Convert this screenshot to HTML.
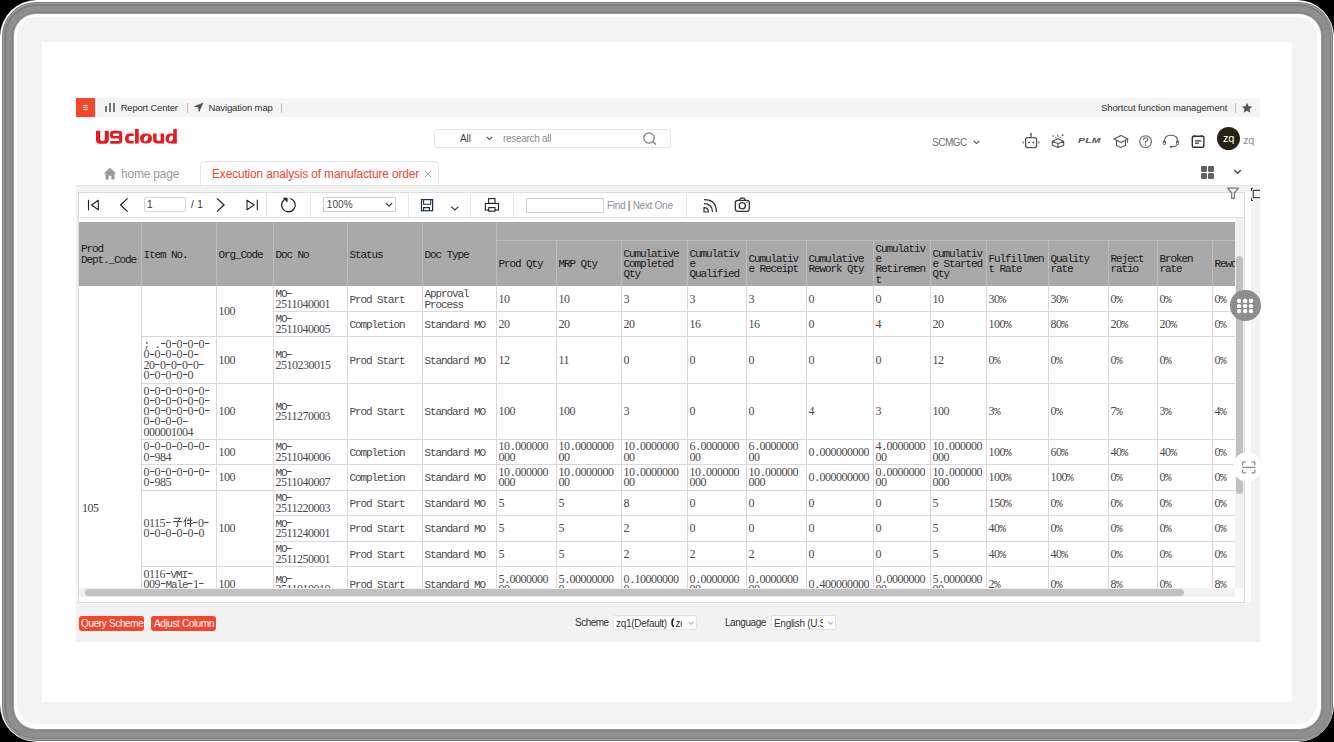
<!DOCTYPE html><html><head><meta charset="utf-8"><style>
*{box-sizing:border-box;margin:0;padding:0}
html,body{width:1334px;height:742px;overflow:hidden;background:#000}
body{position:relative;font-family:"Liberation Sans",sans-serif;color:#333}
.a{position:absolute}
.frame{left:0;top:0;width:1334px;height:742px;border-radius:40px;background:#fff}
.ring{left:2px;top:2px;width:1330px;height:738px;border-radius:38px;border:12px solid #8b8b8b;
 box-shadow:inset 0 0 0 1px #7a7a7a, 0 0 0 0.5px #888}
.inner{left:18px;top:18px;width:1298px;height:706px;border-radius:22px;background:#f3f3f3}
.content{left:42px;top:42px;width:1250px;height:660px;background:#fff}
.t{white-space:pre;position:absolute;line-height:1}
.d{font-family:"Liberation Serif",serif;font-size:12px;letter-spacing:-0.5px;line-height:1px}
.c{letter-spacing:0;line-height:1px}
.h{display:inline-block;width:5.5px;height:5px;background:linear-gradient(currentColor,currentColor) no-repeat 0.5px 0.3px/4.5px 1px}
.mono{font-family:"Liberation Mono",monospace;font-size:11px;letter-spacing:-1.1px;color:#222;line-height:10.3px;white-space:pre}
</style></head><body>
<div class="a" style="left:0;top:0;width:1334px;height:742px;border-radius:37px;background:#fff"></div>
<div class="a" style="left:2px;top:2px;width:1331px;height:739px;border-radius:34px;background:#7c7c7c"></div>
<div class="a" style="left:3px;top:3px;width:1329px;height:737px;border-radius:33px;background:#a4a4a4"></div>
<div class="a" style="left:4px;top:4px;width:1327px;height:735px;border-radius:32px;background:#7e7e7e"></div>
<div class="a" style="left:5.5px;top:5.5px;width:1324.0px;height:732.0px;border-radius:30.5px;background:#8f8f8f"></div>
<div class="a" style="left:12px;top:12px;width:1311px;height:719px;border-radius:24px;background:#808080"></div>
<div class="a" style="left:13px;top:13px;width:1309px;height:717px;border-radius:23px;background:#9c9c9c"></div>
<div class="a" style="left:14px;top:14px;width:1307px;height:715px;border-radius:22px;background:#fff"></div>
<div class="a" style="left:17px;top:17px;width:1300px;height:707px;border-radius:20px;background:#f3f3f3"></div>
<div class="a content"></div>
<div class="a" style="left:76px;top:98px;width:1184px;height:19px;background:#f4f4f4"></div>
<div class="a" style="left:76px;top:98px;width:19px;height:19px;background:#f5472e"></div>
<div class="a" style="left:83px;top:105px;width:5px;height:1px;background:#fde0dc"></div>
<div class="a" style="left:83px;top:107px;width:5px;height:1px;background:#fde0dc"></div>
<div class="a" style="left:83px;top:109px;width:5px;height:1px;background:#fde0dc"></div>
<div class="a" style="left:105px;top:106px;width:2px;height:6px;background:#777"></div>
<div class="a" style="left:109px;top:103px;width:2px;height:9px;background:#777"></div>
<div class="a" style="left:113px;top:103px;width:2px;height:9px;background:#777"></div>
<div class="t" style="left:120.7px;top:103.2px;font-size:9.5px;letter-spacing:-0.2px;color:#333">Report Center</div>
<div class="a" style="left:187px;top:103px;width:1px;height:10px;background:#bbb"></div>
<svg class="a" style="left:193px;top:102px" width="11" height="11" viewBox="0 0 11 11"><path d="M10.5 0.5 L0.5 4.5 L5 5.5 L6 10.5 Z" fill="#555"/></svg>
<div class="t" style="left:208.4px;top:103.2px;font-size:9.5px;letter-spacing:-0.12px;color:#333">Navigation map</div>
<div class="a" style="left:281px;top:103px;width:1px;height:10px;background:#bbb"></div>
<div class="t" style="left:1101px;top:103.2px;font-size:9.5px;letter-spacing:-0.11px;color:#333">Shortcut function management</div>
<div class="a" style="left:1235px;top:103px;width:1px;height:10px;background:#bbb"></div>
<svg class="a" style="left:1241px;top:102px" width="12" height="12" viewBox="0 0 24 24"><path d="M12 1.5l3.2 7 7.3.7-5.5 4.9 1.6 7.4L12 17.7l-6.6 3.8 1.6-7.4L1.5 9.2l7.3-.7z" fill="#555"/></svg>
<svg class="a" style="left:90px;top:124px" width="95" height="26" viewBox="90 124 95 26"><g fill="#e31b23">
<path d="M96 130.8H100.2V139Q100.2 140.9 102 140.9H103Q104.8 140.9 104.8 139V130.8H108.8V139.8Q108.8 143.8 104.8 143.8H100Q96 143.8 96 139.8Z"/>
<path fill-rule="evenodd" d="M113.3 130.8H118.9Q122.2 130.8 122.2 134.1V140.5Q122.2 143.8 118.9 143.8H110.2V141H119.1V138.6H113.3Q110 138.6 110 135.3V134.1Q110 130.8 113.3 130.8ZM114.1 133.5H119.1V135.9H114.1Q112.9 135.9 112.9 134.7Q112.9 133.5 114.1 133.5Z"/>
<path d="M133.7 133.4H129.5Q125 133.4 125 138.5Q125 143.6 129.5 143.6H133.7V140.9H130.2Q128.6 140.9 128.6 138.5Q128.6 136.1 130.2 136.1H133.7Z"/>
<rect x="135" y="129" width="3.7" height="14.6"/>
<path fill-rule="evenodd" d="M146 133.4Q152 133.4 152 138.5Q152 143.6 146 143.6Q140 143.6 140 138.5Q140 133.4 146 133.4ZM147.4 135.6Q149 136.3 147.8 139.5Q146.5 142 144.7 141.4Q143 140.7 144.3 137.5Q145.6 135 147.4 135.6Z"/>
<path d="M153.1 133.4H156.6V139.5Q156.6 140.8 158 140.8H160.6V133.4H164V143.6H157.5Q153.1 143.6 153.1 139.5Z"/>
<rect x="173.3" y="129" width="3.5" height="14.6"/>
<path fill-rule="evenodd" d="M174 133.4H171Q165.5 133.4 165.5 138.5Q165.5 143.6 171 143.6H174ZM172.4 135.6Q174 136.3 172.8 139.5Q171.5 142 169.7 141.4Q168 140.7 169.3 137.5Q170.6 135 172.4 135.6Z"/>
</g></svg>
<div class="a" style="left:434px;top:129px;width:237px;height:19px;border:1px solid #e6e6e6;border-radius:3px"></div>
<div class="t" style="left:460px;top:134px;font-size:10px;color:#444;letter-spacing:-0.1px">All</div>
<svg class="a" style="left:486px;top:136px" width="7" height="5" viewBox="0 0 7 5"><path d="M0.8 1L3.5 3.6L6.2 1" stroke="#555" stroke-width="1.1" fill="none"/></svg>
<div class="t" style="left:503px;top:134px;font-size:10px;color:#8c8c8c;letter-spacing:-0.3px">research all</div>
<svg class="a" style="left:643px;top:132px" width="14" height="13" viewBox="0 0 14 13"><circle cx="6" cy="6" r="5.2" stroke="#777" stroke-width="1.2" fill="none"/><path d="M9.8 9.6L13 12.5" stroke="#777" stroke-width="1.3"/></svg>
<div class="t" style="left:932px;top:138px;font-size:10px;color:#707070;letter-spacing:-0.5px">SCMGC</div>
<svg class="a" style="left:973px;top:140px" width="7" height="5" viewBox="0 0 7 5"><path d="M0.8 1L3.5 3.6L6.2 1" stroke="#555" stroke-width="1.1" fill="none"/></svg>
<svg class="a" style="left:1021px;top:132px" width="20" height="17" viewBox="0 0 20 17">
<rect x="4.6" y="5.6" width="11" height="10" rx="2" stroke="#555" stroke-width="1.3" fill="none"/>
<path d="M10 2.3V5.4" stroke="#555" stroke-width="1.2"/><circle cx="10" cy="2" r="0.9" fill="#555"/>
<circle cx="8" cy="10.5" r="0.9" fill="#555"/><circle cx="12.3" cy="10.5" r="0.9" fill="#555"/>
<path d="M2.2 9.5V11.5M17.9 9.5V11.5" stroke="#555" stroke-width="1.1"/></svg>
<svg class="a" style="left:1050px;top:132px" width="16" height="17" viewBox="1050 132 16 17">
<path d="M1052.3 141.2L1058 138.8L1063.7 141.2L1058 143.6Z M1052.3 141.2V145.3L1058 147.6L1063.7 145.3V141.2 M1058 143.6V147.6" stroke="#555" stroke-width="1.1" fill="none" stroke-linejoin="round"/>
<path d="M1055.2 137.2l1.2 1.3M1057.6 134.6l.7 2.2M1060.8 137l-1.1 1.2" stroke="#555" stroke-width="1" fill="none"/>
<circle cx="1053.2" cy="136" r="0.8" fill="#555"/><circle cx="1062.6" cy="135.2" r="0.9" fill="#555"/></svg>
<div class="t" style="left:1077.5px;top:137px;font-size:8px;font-weight:bold;font-style:italic;color:#555;letter-spacing:0.2px;transform:scaleX(1.3);transform-origin:0 0">PLM</div>
<svg class="a" style="left:1113px;top:134px" width="16" height="15" viewBox="0 0 16 15">
<path d="M1 5L8 1.5L15 5L8 8.5Z" stroke="#555" stroke-width="1.1" fill="none" stroke-linejoin="round"/>
<path d="M3.5 6.5V11.5L8 13.5L12.5 11.5V6.5" stroke="#555" stroke-width="1.1" fill="none"/>
<path d="M14.6 5.5V9" stroke="#555" stroke-width="0.9"/></svg>
<svg class="a" style="left:1138px;top:134px" width="15" height="15" viewBox="0 0 15 15"><circle cx="7.6" cy="7.6" r="5.9" stroke="#666" stroke-width="1.1" fill="none"/><path d="M5.6 6Q5.6 3.8 7.6 3.8Q9.6 3.8 9.6 5.6Q9.6 6.8 7.6 7.8V9.6" stroke="#666" stroke-width="1.1" fill="none"/><circle cx="7.6" cy="11.2" r="0.7" fill="#666"/></svg>
<svg class="a" style="left:1162px;top:134px" width="18" height="15" viewBox="0 0 18 15"><path d="M2.5 8.5V7Q2.5 1.3 9 1.3Q15.5 1.3 15.5 7V8.5" stroke="#555" stroke-width="1.1" fill="none"/><rect x="1.3" y="6.8" width="2.2" height="3.8" rx="1" stroke="#555" stroke-width="1" fill="none"/><rect x="14.5" y="6.8" width="2.2" height="3.8" rx="1" stroke="#555" stroke-width="1" fill="none"/><path d="M15.5 10.5Q15 12.5 9.5 12.8" stroke="#555" stroke-width="1" fill="none"/><circle cx="9" cy="12.8" r="1.1" fill="#555"/></svg>
<svg class="a" style="left:1190px;top:133px" width="16" height="16" viewBox="0 0 16 16"><rect x="2.3" y="3.3" width="11.6" height="11" rx="1.2" stroke="#333" stroke-width="1.4" fill="none"/><path d="M4.7 2V4.3M11.5 2V4.3" stroke="#333" stroke-width="1.3"/><path d="M5 7.8H11.3M5 10.2H9" stroke="#333" stroke-width="1.3"/></svg>
<div class="a" style="left:1217px;top:127.3px;width:23px;height:23px;border-radius:50%;background:#262314"></div>
<div class="t" style="left:1223px;top:133px;font-size:11px;color:#fff;letter-spacing:-0.2px">zq</div>
<div class="t" style="left:1243px;top:135px;font-size:11px;color:#8a90a0;letter-spacing:-0.2px">zq</div>
<svg class="a" style="left:103px;top:167px" width="14" height="13" viewBox="0 0 14 13"><path d="M7 0.8L0.8 6.5H2.6V12.5H5.6V8.8H8.4V12.5H11.4V6.5H13.2Z" fill="#999"/></svg>
<div class="t" style="left:121px;top:167.5px;font-size:12px;color:#999;letter-spacing:-0.2px">home page</div>
<div class="a" style="left:200px;top:161px;width:239px;height:26px;border:1px solid #e6e6e6;border-bottom:none;border-radius:5px 5px 0 0;background:#fff"></div>
<div class="t" style="left:212px;top:167.5px;font-size:12px;color:#f5452f;letter-spacing:-0.18px">Execution analysis of manufacture order</div>
<svg class="a" style="left:424px;top:170px" width="8" height="8" viewBox="0 0 8 8"><path d="M1 1L7 7M7 1L1 7" stroke="#aaa" stroke-width="1"/></svg>
<svg class="a" style="left:1201px;top:166px" width="13" height="13" viewBox="0 0 13 13"><rect x="0" y="0" width="6" height="6" rx="1.2" fill="#626262"/><rect x="7" y="0" width="6" height="6" rx="1.2" fill="#626262"/><rect x="0" y="7" width="6" height="6" rx="1.2" fill="#626262"/><rect x="7" y="7" width="6" height="6" rx="1.2" fill="#626262"/></svg>
<svg class="a" style="left:1232px;top:167px" width="11" height="9" viewBox="1232 167 11 9"><path d="M1234.2 170L1237.6 173.3L1241 170" stroke="#444" stroke-width="1.3" fill="none"/></svg>
<div class="a" style="left:76px;top:185px;width:1184px;height:457px;background:#f2f2f2;border-top:1px solid #e6e6e6"></div>
<div class="a" style="left:78px;top:192px;width:1173px;height:410px;background:#fff"></div>
<div class="a" style="left:78px;top:192px;width:1167px;height:411px;border:1px solid #dcdcdc"></div>
<div class="a" style="left:79px;top:217px;width:1165px;height:1px;background:#e2e2e2"></div>
<svg class="a" style="left:85px;top:197px" width="16" height="16" viewBox="85 197 16 16"><path d="M88.5 199.8V210.3" stroke="#222" stroke-width="1.1"/><path d="M98.3 200.3V209.8L91.5 205Z" stroke="#222" stroke-width="1.1" fill="none" stroke-linejoin="round"/></svg>
<svg class="a" style="left:117px;top:196px" width="14" height="18" viewBox="117 196 14 18"><path d="M127.6 198.4L120.6 205L127.6 211.6" stroke="#222" stroke-width="1.3" fill="none"/></svg>
<div class="a" style="left:144px;top:197px;width:42px;height:15px;border:1px solid #d9d9d9;border-radius:2px"></div>
<div class="t" style="left:147px;top:200px;font-size:10px;color:#333">1</div>
<div class="t" style="left:191px;top:200px;font-size:10px;color:#333;letter-spacing:0.4px">/ 1</div>
<svg class="a" style="left:214px;top:196px" width="14" height="18" viewBox="214 196 14 18"><path d="M217 198.4L224 205L217 211.6" stroke="#222" stroke-width="1.3" fill="none"/></svg>
<svg class="a" style="left:244px;top:197px" width="16" height="16" viewBox="244 197 16 16"><path d="M257.3 199.8V210.3" stroke="#222" stroke-width="1.1"/><path d="M247 200.3V209.8L254.2 205Z" stroke="#222" stroke-width="1.1" fill="none" stroke-linejoin="round"/></svg>
<div class="a" style="left:266px;top:193px;width:1px;height:24px;background:#e6e6e6"></div>
<svg class="a" style="left:278px;top:193px" width="20" height="22" viewBox="278 193 20 22"><path d="M290.2 198.47A6.8 6.8 0 1 1 286.6 198.5" stroke="#222" stroke-width="1.2" fill="none"/><path d="M283.6 198.1H287.1V201.7Z" stroke="#222" stroke-width="0.9" fill="#222" stroke-linejoin="miter"/></svg>
<div class="a" style="left:310px;top:193px;width:1px;height:24px;background:#e6e6e6"></div>
<div class="a" style="left:323px;top:197px;width:73px;height:15px;border:1px solid #cfcfcf"></div>
<div class="t" style="left:326.8px;top:200px;font-size:10px;color:#4a4a4a;letter-spacing:0.1px">100%</div>
<svg class="a" style="left:384px;top:201px" width="10" height="7" viewBox="0 0 10 7"><path d="M1.9 2L5 5.1L8.1 2" stroke="#444" stroke-width="1.2" fill="none"/></svg>
<div class="a" style="left:408px;top:193px;width:1px;height:24px;background:#e6e6e6"></div>
<svg class="a" style="left:419px;top:197px" width="16" height="16" viewBox="419 197 16 16"><rect x="421.5" y="199.6" width="11.1" height="11.1" stroke="#1c3048" stroke-width="1.2" fill="none"/><path d="M423.6 199.6V204.2H430.7V199.6" stroke="#1c3048" stroke-width="1.1" fill="none"/><path d="M423.6 210.8V207.6H429.4V210.8" stroke="#1c3048" stroke-width="1.1" fill="none"/></svg>
<svg class="a" style="left:449px;top:203px" width="11" height="9" viewBox="449 203 11 9"><path d="M451.2 206.6L454.8 210L458.4 206.6" stroke="#333" stroke-width="1.1" fill="none"/></svg>
<div class="a" style="left:470px;top:193px;width:1px;height:24px;background:#e6e6e6"></div>
<svg class="a" style="left:482px;top:196px" width="19" height="18" viewBox="482 196 19 18"><rect x="488.7" y="198.6" width="6.3" height="4.8" stroke="#222" stroke-width="1.1" fill="none"/><rect x="485.3" y="203.5" width="13.2" height="6.6" stroke="#222" stroke-width="1.1" fill="none"/><rect x="488.7" y="207.6" width="6.3" height="3.6" stroke="#222" stroke-width="1.1" fill="#fff"/></svg>
<div class="a" style="left:513px;top:193px;width:1px;height:24px;background:#e6e6e6"></div>
<div class="a" style="left:526px;top:198px;width:78px;height:15px;border:1px solid #d0d0d0"></div>
<div class="t" style="left:607px;top:201px;font-size:10px;color:#8a929c;letter-spacing:-0.28px">Find <span style="color:#5a3a1a">|</span> Next One</div>
<div class="a" style="left:686px;top:193px;width:1px;height:24px;background:#e6e6e6"></div>
<svg class="a" style="left:701px;top:196px" width="19" height="18" viewBox="701 196 19 18"><path d="M704 199.6Q716.4 199.6 716.4 212" stroke="#333" stroke-width="1.3" fill="none"/><path d="M704 203.6Q712.4 203.6 712.4 212" stroke="#333" stroke-width="1.3" fill="none"/><path d="M704 207.6Q708.4 207.6 708.4 212H704Z" stroke="#333" stroke-width="1.2" fill="none"/></svg>
<svg class="a" style="left:733px;top:196px" width="18" height="18" viewBox="733 196 18 18"><rect x="735.3" y="200.3" width="14" height="11" rx="2.5" stroke="#333" stroke-width="1.3" fill="none"/><path d="M739.2 200.3L740.6 198.2H744L745.4 200.3" stroke="#333" stroke-width="1.2" fill="none"/><circle cx="742.3" cy="205.8" r="3.1" stroke="#333" stroke-width="1.3" fill="none"/><circle cx="746.8" cy="202.4" r="0.6" fill="#333"/></svg>
<svg class="a" style="left:1225px;top:186px" width="16" height="15" viewBox="1225 186 16 15"><path d="M1227.6 188.2H1238.4L1234.3 193V198.4H1231.7V193Z" stroke="#6e7888" stroke-width="1.2" fill="none" stroke-linejoin="round"/></svg>
<div class="a" style="left:1251px;top:192px;width:9px;height:450px;background:#f2f2f2"></div>
<svg class="a" style="left:1250px;top:187px" width="10" height="15" viewBox="1250 187 10 15"><path d="M1253 188.2H1251.5V191M1251.5 198V200.5H1253" stroke="#444" stroke-width="1.1" fill="none"/><rect x="1253.3" y="190.4" width="8" height="7.2" stroke="#444" stroke-width="1.2" fill="none"/></svg>
<div class="a" style="left:79px;top:222px;width:1156px;height:366px;overflow:hidden">
<div class="a" style="left:0px;top:0px;width:1221px;height:64px;background:#a9a9a9"></div>
<div class="a" style="left:62px;top:0px;width:1px;height:64px;background:#bcbcbc"></div>
<div class="a" style="left:137px;top:0px;width:1px;height:64px;background:#bcbcbc"></div>
<div class="a" style="left:194px;top:0px;width:1px;height:64px;background:#bcbcbc"></div>
<div class="a" style="left:268px;top:0px;width:1px;height:64px;background:#bcbcbc"></div>
<div class="a" style="left:343px;top:0px;width:1px;height:64px;background:#bcbcbc"></div>
<div class="a" style="left:417px;top:0px;width:1px;height:64px;background:#bcbcbc"></div>
<div class="a" style="left:417px;top:18px;width:804px;height:1px;background:#bcbcbc"></div>
<div class="a" style="left:477px;top:18px;width:1px;height:46px;background:#bcbcbc"></div>
<div class="a" style="left:542px;top:18px;width:1px;height:46px;background:#bcbcbc"></div>
<div class="a" style="left:608px;top:18px;width:1px;height:46px;background:#bcbcbc"></div>
<div class="a" style="left:667px;top:18px;width:1px;height:46px;background:#bcbcbc"></div>
<div class="a" style="left:727px;top:18px;width:1px;height:46px;background:#bcbcbc"></div>
<div class="a" style="left:794px;top:18px;width:1px;height:46px;background:#bcbcbc"></div>
<div class="a" style="left:851px;top:18px;width:1px;height:46px;background:#bcbcbc"></div>
<div class="a" style="left:907px;top:18px;width:1px;height:46px;background:#bcbcbc"></div>
<div class="a" style="left:969px;top:18px;width:1px;height:46px;background:#bcbcbc"></div>
<div class="a" style="left:1029px;top:18px;width:1px;height:46px;background:#bcbcbc"></div>
<div class="a" style="left:1078px;top:18px;width:1px;height:46px;background:#bcbcbc"></div>
<div class="a" style="left:1133px;top:18px;width:1px;height:46px;background:#bcbcbc"></div>
<div class="a" style="left:1196px;top:18px;width:1px;height:46px;background:#bcbcbc"></div>
<div class="a mono" style="left:2px;top:0px;width:62px;height:64px;display:flex;align-items:center;padding-top:1.5px;color:#1a1a1a"><div>Prod
Dept._Code</div></div>
<div class="a mono" style="left:64.5px;top:0px;width:75px;height:64px;display:flex;align-items:center;padding-top:1.5px;color:#1a1a1a"><div>Item No.</div></div>
<div class="a mono" style="left:139.5px;top:0px;width:57px;height:64px;display:flex;align-items:center;padding-top:1.5px;color:#1a1a1a"><div>Org_Code</div></div>
<div class="a mono" style="left:196.5px;top:0px;width:74px;height:64px;display:flex;align-items:center;padding-top:1.5px;color:#1a1a1a"><div>Doc No</div></div>
<div class="a mono" style="left:270.5px;top:0px;width:75px;height:64px;display:flex;align-items:center;padding-top:1.5px;color:#1a1a1a"><div>Status</div></div>
<div class="a mono" style="left:345.5px;top:0px;width:74px;height:64px;display:flex;align-items:center;padding-top:1.5px;color:#1a1a1a"><div>Doc Type</div></div>
<div class="a mono" style="left:419.5px;top:19px;width:60px;height:45px;display:flex;align-items:center;padding-top:1.5px;color:#1a1a1a"><div>Prod Qty</div></div>
<div class="a mono" style="left:479.5px;top:19px;width:65px;height:45px;display:flex;align-items:center;padding-top:1.5px;color:#1a1a1a"><div>MRP Qty</div></div>
<div class="a mono" style="left:544.5px;top:19px;width:66px;height:45px;display:flex;align-items:center;padding-top:1.5px;color:#1a1a1a"><div>Cumulative
Completed
Qty</div></div>
<div class="a mono" style="left:610.5px;top:19px;width:59px;height:45px;display:flex;align-items:center;padding-top:1.5px;color:#1a1a1a"><div>Cumulativ
e
Qualified</div></div>
<div class="a mono" style="left:669.5px;top:19px;width:60px;height:45px;display:flex;align-items:center;padding-top:1.5px;color:#1a1a1a"><div>Cumulativ
e Receipt</div></div>
<div class="a mono" style="left:729.5px;top:19px;width:67px;height:45px;display:flex;align-items:center;padding-top:1.5px;color:#1a1a1a"><div>Cumulative
Rework Qty</div></div>
<div class="a mono" style="left:796.5px;top:19px;width:57px;height:45px;display:flex;align-items:center;padding-top:1.5px;color:#1a1a1a"><div>Cumulativ
e
Retiremen
t</div></div>
<div class="a mono" style="left:853.5px;top:19px;width:56px;height:45px;display:flex;align-items:center;padding-top:1.5px;color:#1a1a1a"><div>Cumulativ
e Started
Qty</div></div>
<div class="a mono" style="left:909.5px;top:19px;width:62px;height:45px;display:flex;align-items:center;padding-top:1.5px;color:#1a1a1a"><div>Fulfillmen
t Rate</div></div>
<div class="a mono" style="left:971.5px;top:19px;width:60px;height:45px;display:flex;align-items:center;padding-top:1.5px;color:#1a1a1a"><div>Quality
rate</div></div>
<div class="a mono" style="left:1031.5px;top:19px;width:49px;height:45px;display:flex;align-items:center;padding-top:1.5px;color:#1a1a1a"><div>Reject
ratio</div></div>
<div class="a mono" style="left:1080.5px;top:19px;width:55px;height:45px;display:flex;align-items:center;padding-top:1.5px;color:#1a1a1a"><div>Broken
rate</div></div>
<div class="a mono" style="left:1135.5px;top:19px;width:63px;height:45px;display:flex;align-items:center;padding-top:1.5px;color:#1a1a1a"><div>Rework rate</div></div>
<div class="a" style="left:0px;top:64px;width:1221px;height:414px;background:#fff"></div>
<div class="a mono" style="left:196.5px;top:64px;width:74px;height:26px;display:flex;align-items:center;padding-top:1.5px;color:#4a4a4a"><div>MO<i class="h"></i>
<span class="d">2511040001</span></div></div>
<div class="a mono" style="left:270.5px;top:64px;width:75px;height:26px;display:flex;align-items:center;padding-top:1.5px;color:#4a4a4a"><div>Prod Start</div></div>
<div class="a mono" style="left:345.5px;top:64px;width:74px;height:26px;display:flex;align-items:center;padding-top:1.5px;color:#4a4a4a"><div>Approval
Process</div></div>
<div class="a mono" style="left:419.5px;top:64px;width:60px;height:26px;display:flex;align-items:center;padding-top:1.5px;color:#4a4a4a"><div><span class="d">10</span></div></div>
<div class="a mono" style="left:479.5px;top:64px;width:65px;height:26px;display:flex;align-items:center;padding-top:1.5px;color:#4a4a4a"><div><span class="d">10</span></div></div>
<div class="a mono" style="left:544.5px;top:64px;width:66px;height:26px;display:flex;align-items:center;padding-top:1.5px;color:#4a4a4a"><div><span class="d">3</span></div></div>
<div class="a mono" style="left:610.5px;top:64px;width:59px;height:26px;display:flex;align-items:center;padding-top:1.5px;color:#4a4a4a"><div><span class="d">3</span></div></div>
<div class="a mono" style="left:669.5px;top:64px;width:60px;height:26px;display:flex;align-items:center;padding-top:1.5px;color:#4a4a4a"><div><span class="d">3</span></div></div>
<div class="a mono" style="left:729.5px;top:64px;width:67px;height:26px;display:flex;align-items:center;padding-top:1.5px;color:#4a4a4a"><div><span class="d">0</span></div></div>
<div class="a mono" style="left:796.5px;top:64px;width:57px;height:26px;display:flex;align-items:center;padding-top:1.5px;color:#4a4a4a"><div><span class="d">0</span></div></div>
<div class="a mono" style="left:853.5px;top:64px;width:56px;height:26px;display:flex;align-items:center;padding-top:1.5px;color:#4a4a4a"><div><span class="d">10</span></div></div>
<div class="a mono" style="left:909.5px;top:64px;width:62px;height:26px;display:flex;align-items:center;padding-top:1.5px;color:#4a4a4a"><div><span class="d">30</span>%</div></div>
<div class="a mono" style="left:971.5px;top:64px;width:60px;height:26px;display:flex;align-items:center;padding-top:1.5px;color:#4a4a4a"><div><span class="d">30</span>%</div></div>
<div class="a mono" style="left:1031.5px;top:64px;width:49px;height:26px;display:flex;align-items:center;padding-top:1.5px;color:#4a4a4a"><div><span class="d">0</span>%</div></div>
<div class="a mono" style="left:1080.5px;top:64px;width:55px;height:26px;display:flex;align-items:center;padding-top:1.5px;color:#4a4a4a"><div><span class="d">0</span>%</div></div>
<div class="a mono" style="left:1135.5px;top:64px;width:63px;height:26px;display:flex;align-items:center;padding-top:1.5px;color:#4a4a4a"><div><span class="d">0</span>%</div></div>
<div class="a" style="left:194px;top:89px;width:1027px;height:1px;background:#d9d9d9"></div>
<div class="a mono" style="left:196.5px;top:89px;width:74px;height:26px;display:flex;align-items:center;padding-top:1.5px;color:#4a4a4a"><div>MO<i class="h"></i>
<span class="d">2511040005</span></div></div>
<div class="a mono" style="left:270.5px;top:89px;width:75px;height:26px;display:flex;align-items:center;padding-top:1.5px;color:#4a4a4a"><div>Completion</div></div>
<div class="a mono" style="left:345.5px;top:89px;width:74px;height:26px;display:flex;align-items:center;padding-top:1.5px;color:#4a4a4a"><div>Standard MO</div></div>
<div class="a mono" style="left:419.5px;top:89px;width:60px;height:26px;display:flex;align-items:center;padding-top:1.5px;color:#4a4a4a"><div><span class="d">20</span></div></div>
<div class="a mono" style="left:479.5px;top:89px;width:65px;height:26px;display:flex;align-items:center;padding-top:1.5px;color:#4a4a4a"><div><span class="d">20</span></div></div>
<div class="a mono" style="left:544.5px;top:89px;width:66px;height:26px;display:flex;align-items:center;padding-top:1.5px;color:#4a4a4a"><div><span class="d">20</span></div></div>
<div class="a mono" style="left:610.5px;top:89px;width:59px;height:26px;display:flex;align-items:center;padding-top:1.5px;color:#4a4a4a"><div><span class="d">16</span></div></div>
<div class="a mono" style="left:669.5px;top:89px;width:60px;height:26px;display:flex;align-items:center;padding-top:1.5px;color:#4a4a4a"><div><span class="d">16</span></div></div>
<div class="a mono" style="left:729.5px;top:89px;width:67px;height:26px;display:flex;align-items:center;padding-top:1.5px;color:#4a4a4a"><div><span class="d">0</span></div></div>
<div class="a mono" style="left:796.5px;top:89px;width:57px;height:26px;display:flex;align-items:center;padding-top:1.5px;color:#4a4a4a"><div><span class="d">4</span></div></div>
<div class="a mono" style="left:853.5px;top:89px;width:56px;height:26px;display:flex;align-items:center;padding-top:1.5px;color:#4a4a4a"><div><span class="d">20</span></div></div>
<div class="a mono" style="left:909.5px;top:89px;width:62px;height:26px;display:flex;align-items:center;padding-top:1.5px;color:#4a4a4a"><div><span class="d">100</span>%</div></div>
<div class="a mono" style="left:971.5px;top:89px;width:60px;height:26px;display:flex;align-items:center;padding-top:1.5px;color:#4a4a4a"><div><span class="d">80</span>%</div></div>
<div class="a mono" style="left:1031.5px;top:89px;width:49px;height:26px;display:flex;align-items:center;padding-top:1.5px;color:#4a4a4a"><div><span class="d">20</span>%</div></div>
<div class="a mono" style="left:1080.5px;top:89px;width:55px;height:26px;display:flex;align-items:center;padding-top:1.5px;color:#4a4a4a"><div><span class="d">20</span>%</div></div>
<div class="a mono" style="left:1135.5px;top:89px;width:63px;height:26px;display:flex;align-items:center;padding-top:1.5px;color:#4a4a4a"><div><span class="d">0</span>%</div></div>
<div class="a" style="left:194px;top:114px;width:1027px;height:1px;background:#d9d9d9"></div>
<div class="a mono" style="left:196.5px;top:114px;width:74px;height:48px;display:flex;align-items:center;padding-top:1.5px;color:#4a4a4a"><div>MO<i class="h"></i>
<span class="d">2510230015</span></div></div>
<div class="a mono" style="left:270.5px;top:114px;width:75px;height:48px;display:flex;align-items:center;padding-top:1.5px;color:#4a4a4a"><div>Prod Start</div></div>
<div class="a mono" style="left:345.5px;top:114px;width:74px;height:48px;display:flex;align-items:center;padding-top:1.5px;color:#4a4a4a"><div>Standard MO</div></div>
<div class="a mono" style="left:419.5px;top:114px;width:60px;height:48px;display:flex;align-items:center;padding-top:1.5px;color:#4a4a4a"><div><span class="d">12</span></div></div>
<div class="a mono" style="left:479.5px;top:114px;width:65px;height:48px;display:flex;align-items:center;padding-top:1.5px;color:#4a4a4a"><div><span class="d">11</span></div></div>
<div class="a mono" style="left:544.5px;top:114px;width:66px;height:48px;display:flex;align-items:center;padding-top:1.5px;color:#4a4a4a"><div><span class="d">0</span></div></div>
<div class="a mono" style="left:610.5px;top:114px;width:59px;height:48px;display:flex;align-items:center;padding-top:1.5px;color:#4a4a4a"><div><span class="d">0</span></div></div>
<div class="a mono" style="left:669.5px;top:114px;width:60px;height:48px;display:flex;align-items:center;padding-top:1.5px;color:#4a4a4a"><div><span class="d">0</span></div></div>
<div class="a mono" style="left:729.5px;top:114px;width:67px;height:48px;display:flex;align-items:center;padding-top:1.5px;color:#4a4a4a"><div><span class="d">0</span></div></div>
<div class="a mono" style="left:796.5px;top:114px;width:57px;height:48px;display:flex;align-items:center;padding-top:1.5px;color:#4a4a4a"><div><span class="d">0</span></div></div>
<div class="a mono" style="left:853.5px;top:114px;width:56px;height:48px;display:flex;align-items:center;padding-top:1.5px;color:#4a4a4a"><div><span class="d">12</span></div></div>
<div class="a mono" style="left:909.5px;top:114px;width:62px;height:48px;display:flex;align-items:center;padding-top:1.5px;color:#4a4a4a"><div><span class="d">0</span>%</div></div>
<div class="a mono" style="left:971.5px;top:114px;width:60px;height:48px;display:flex;align-items:center;padding-top:1.5px;color:#4a4a4a"><div><span class="d">0</span>%</div></div>
<div class="a mono" style="left:1031.5px;top:114px;width:49px;height:48px;display:flex;align-items:center;padding-top:1.5px;color:#4a4a4a"><div><span class="d">0</span>%</div></div>
<div class="a mono" style="left:1080.5px;top:114px;width:55px;height:48px;display:flex;align-items:center;padding-top:1.5px;color:#4a4a4a"><div><span class="d">0</span>%</div></div>
<div class="a mono" style="left:1135.5px;top:114px;width:63px;height:48px;display:flex;align-items:center;padding-top:1.5px;color:#4a4a4a"><div><span class="d">0</span>%</div></div>
<div class="a" style="left:194px;top:161px;width:1027px;height:1px;background:#d9d9d9"></div>
<div class="a mono" style="left:196.5px;top:161px;width:74px;height:57px;display:flex;align-items:center;padding-top:1.5px;color:#4a4a4a"><div>MO<i class="h"></i>
<span class="d">2511270003</span></div></div>
<div class="a mono" style="left:270.5px;top:161px;width:75px;height:57px;display:flex;align-items:center;padding-top:1.5px;color:#4a4a4a"><div>Prod Start</div></div>
<div class="a mono" style="left:345.5px;top:161px;width:74px;height:57px;display:flex;align-items:center;padding-top:1.5px;color:#4a4a4a"><div>Standard MO</div></div>
<div class="a mono" style="left:419.5px;top:161px;width:60px;height:57px;display:flex;align-items:center;padding-top:1.5px;color:#4a4a4a"><div><span class="d">100</span></div></div>
<div class="a mono" style="left:479.5px;top:161px;width:65px;height:57px;display:flex;align-items:center;padding-top:1.5px;color:#4a4a4a"><div><span class="d">100</span></div></div>
<div class="a mono" style="left:544.5px;top:161px;width:66px;height:57px;display:flex;align-items:center;padding-top:1.5px;color:#4a4a4a"><div><span class="d">3</span></div></div>
<div class="a mono" style="left:610.5px;top:161px;width:59px;height:57px;display:flex;align-items:center;padding-top:1.5px;color:#4a4a4a"><div><span class="d">0</span></div></div>
<div class="a mono" style="left:669.5px;top:161px;width:60px;height:57px;display:flex;align-items:center;padding-top:1.5px;color:#4a4a4a"><div><span class="d">0</span></div></div>
<div class="a mono" style="left:729.5px;top:161px;width:67px;height:57px;display:flex;align-items:center;padding-top:1.5px;color:#4a4a4a"><div><span class="d">4</span></div></div>
<div class="a mono" style="left:796.5px;top:161px;width:57px;height:57px;display:flex;align-items:center;padding-top:1.5px;color:#4a4a4a"><div><span class="d">3</span></div></div>
<div class="a mono" style="left:853.5px;top:161px;width:56px;height:57px;display:flex;align-items:center;padding-top:1.5px;color:#4a4a4a"><div><span class="d">100</span></div></div>
<div class="a mono" style="left:909.5px;top:161px;width:62px;height:57px;display:flex;align-items:center;padding-top:1.5px;color:#4a4a4a"><div><span class="d">3</span>%</div></div>
<div class="a mono" style="left:971.5px;top:161px;width:60px;height:57px;display:flex;align-items:center;padding-top:1.5px;color:#4a4a4a"><div><span class="d">0</span>%</div></div>
<div class="a mono" style="left:1031.5px;top:161px;width:49px;height:57px;display:flex;align-items:center;padding-top:1.5px;color:#4a4a4a"><div><span class="d">7</span>%</div></div>
<div class="a mono" style="left:1080.5px;top:161px;width:55px;height:57px;display:flex;align-items:center;padding-top:1.5px;color:#4a4a4a"><div><span class="d">3</span>%</div></div>
<div class="a mono" style="left:1135.5px;top:161px;width:63px;height:57px;display:flex;align-items:center;padding-top:1.5px;color:#4a4a4a"><div><span class="d">4</span>%</div></div>
<div class="a" style="left:194px;top:217px;width:1027px;height:1px;background:#d9d9d9"></div>
<div class="a mono" style="left:196.5px;top:217px;width:74px;height:26px;display:flex;align-items:center;padding-top:1.5px;color:#4a4a4a"><div>MO<i class="h"></i>
<span class="d">2511040006</span></div></div>
<div class="a mono" style="left:270.5px;top:217px;width:75px;height:26px;display:flex;align-items:center;padding-top:1.5px;color:#4a4a4a"><div>Completion</div></div>
<div class="a mono" style="left:345.5px;top:217px;width:74px;height:26px;display:flex;align-items:center;padding-top:1.5px;color:#4a4a4a"><div>Standard MO</div></div>
<div class="a mono" style="left:419.5px;top:217px;width:60px;height:26px;display:flex;align-items:center;padding-top:1.5px;color:#4a4a4a"><div><span class="d">10</span>.<span class="d">000000</span>
<span class="d">000</span></div></div>
<div class="a mono" style="left:479.5px;top:217px;width:65px;height:26px;display:flex;align-items:center;padding-top:1.5px;color:#4a4a4a"><div><span class="d">10</span>.<span class="d">0000000</span>
<span class="d">00</span></div></div>
<div class="a mono" style="left:544.5px;top:217px;width:66px;height:26px;display:flex;align-items:center;padding-top:1.5px;color:#4a4a4a"><div><span class="d">10</span>.<span class="d">0000000</span>
<span class="d">00</span></div></div>
<div class="a mono" style="left:610.5px;top:217px;width:59px;height:26px;display:flex;align-items:center;padding-top:1.5px;color:#4a4a4a"><div><span class="d">6</span>.<span class="d">0000000</span>
<span class="d">00</span></div></div>
<div class="a mono" style="left:669.5px;top:217px;width:60px;height:26px;display:flex;align-items:center;padding-top:1.5px;color:#4a4a4a"><div><span class="d">6</span>.<span class="d">0000000</span>
<span class="d">00</span></div></div>
<div class="a mono" style="left:729.5px;top:217px;width:67px;height:26px;display:flex;align-items:center;padding-top:1.5px;color:#4a4a4a"><div><span class="d">0</span>.<span class="d">000000000</span></div></div>
<div class="a mono" style="left:796.5px;top:217px;width:57px;height:26px;display:flex;align-items:center;padding-top:1.5px;color:#4a4a4a"><div><span class="d">4</span>.<span class="d">0000000</span>
<span class="d">00</span></div></div>
<div class="a mono" style="left:853.5px;top:217px;width:56px;height:26px;display:flex;align-items:center;padding-top:1.5px;color:#4a4a4a"><div><span class="d">10</span>.<span class="d">000000</span>
<span class="d">000</span></div></div>
<div class="a mono" style="left:909.5px;top:217px;width:62px;height:26px;display:flex;align-items:center;padding-top:1.5px;color:#4a4a4a"><div><span class="d">100</span>%</div></div>
<div class="a mono" style="left:971.5px;top:217px;width:60px;height:26px;display:flex;align-items:center;padding-top:1.5px;color:#4a4a4a"><div><span class="d">60</span>%</div></div>
<div class="a mono" style="left:1031.5px;top:217px;width:49px;height:26px;display:flex;align-items:center;padding-top:1.5px;color:#4a4a4a"><div><span class="d">40</span>%</div></div>
<div class="a mono" style="left:1080.5px;top:217px;width:55px;height:26px;display:flex;align-items:center;padding-top:1.5px;color:#4a4a4a"><div><span class="d">40</span>%</div></div>
<div class="a mono" style="left:1135.5px;top:217px;width:63px;height:26px;display:flex;align-items:center;padding-top:1.5px;color:#4a4a4a"><div><span class="d">0</span>%</div></div>
<div class="a" style="left:194px;top:242px;width:1027px;height:1px;background:#d9d9d9"></div>
<div class="a mono" style="left:196.5px;top:242px;width:74px;height:27px;display:flex;align-items:center;padding-top:1.5px;color:#4a4a4a"><div>MO<i class="h"></i>
<span class="d">2511040007</span></div></div>
<div class="a mono" style="left:270.5px;top:242px;width:75px;height:27px;display:flex;align-items:center;padding-top:1.5px;color:#4a4a4a"><div>Completion</div></div>
<div class="a mono" style="left:345.5px;top:242px;width:74px;height:27px;display:flex;align-items:center;padding-top:1.5px;color:#4a4a4a"><div>Standard MO</div></div>
<div class="a mono" style="left:419.5px;top:242px;width:60px;height:27px;display:flex;align-items:center;padding-top:1.5px;color:#4a4a4a"><div><span class="d">10</span>.<span class="d">000000</span>
<span class="d">000</span></div></div>
<div class="a mono" style="left:479.5px;top:242px;width:65px;height:27px;display:flex;align-items:center;padding-top:1.5px;color:#4a4a4a"><div><span class="d">10</span>.<span class="d">0000000</span>
<span class="d">00</span></div></div>
<div class="a mono" style="left:544.5px;top:242px;width:66px;height:27px;display:flex;align-items:center;padding-top:1.5px;color:#4a4a4a"><div><span class="d">10</span>.<span class="d">0000000</span>
<span class="d">00</span></div></div>
<div class="a mono" style="left:610.5px;top:242px;width:59px;height:27px;display:flex;align-items:center;padding-top:1.5px;color:#4a4a4a"><div><span class="d">10</span>.<span class="d">000000</span>
<span class="d">000</span></div></div>
<div class="a mono" style="left:669.5px;top:242px;width:60px;height:27px;display:flex;align-items:center;padding-top:1.5px;color:#4a4a4a"><div><span class="d">10</span>.<span class="d">000000</span>
<span class="d">000</span></div></div>
<div class="a mono" style="left:729.5px;top:242px;width:67px;height:27px;display:flex;align-items:center;padding-top:1.5px;color:#4a4a4a"><div><span class="d">0</span>.<span class="d">000000000</span></div></div>
<div class="a mono" style="left:796.5px;top:242px;width:57px;height:27px;display:flex;align-items:center;padding-top:1.5px;color:#4a4a4a"><div><span class="d">0</span>.<span class="d">0000000</span>
<span class="d">00</span></div></div>
<div class="a mono" style="left:853.5px;top:242px;width:56px;height:27px;display:flex;align-items:center;padding-top:1.5px;color:#4a4a4a"><div><span class="d">10</span>.<span class="d">000000</span>
<span class="d">000</span></div></div>
<div class="a mono" style="left:909.5px;top:242px;width:62px;height:27px;display:flex;align-items:center;padding-top:1.5px;color:#4a4a4a"><div><span class="d">100</span>%</div></div>
<div class="a mono" style="left:971.5px;top:242px;width:60px;height:27px;display:flex;align-items:center;padding-top:1.5px;color:#4a4a4a"><div><span class="d">100</span>%</div></div>
<div class="a mono" style="left:1031.5px;top:242px;width:49px;height:27px;display:flex;align-items:center;padding-top:1.5px;color:#4a4a4a"><div><span class="d">0</span>%</div></div>
<div class="a mono" style="left:1080.5px;top:242px;width:55px;height:27px;display:flex;align-items:center;padding-top:1.5px;color:#4a4a4a"><div><span class="d">0</span>%</div></div>
<div class="a mono" style="left:1135.5px;top:242px;width:63px;height:27px;display:flex;align-items:center;padding-top:1.5px;color:#4a4a4a"><div><span class="d">0</span>%</div></div>
<div class="a" style="left:194px;top:268px;width:1027px;height:1px;background:#d9d9d9"></div>
<div class="a mono" style="left:196.5px;top:268px;width:74px;height:26px;display:flex;align-items:center;padding-top:1.5px;color:#4a4a4a"><div>MO<i class="h"></i>
<span class="d">2511220003</span></div></div>
<div class="a mono" style="left:270.5px;top:268px;width:75px;height:26px;display:flex;align-items:center;padding-top:1.5px;color:#4a4a4a"><div>Prod Start</div></div>
<div class="a mono" style="left:345.5px;top:268px;width:74px;height:26px;display:flex;align-items:center;padding-top:1.5px;color:#4a4a4a"><div>Standard MO</div></div>
<div class="a mono" style="left:419.5px;top:268px;width:60px;height:26px;display:flex;align-items:center;padding-top:1.5px;color:#4a4a4a"><div><span class="d">5</span></div></div>
<div class="a mono" style="left:479.5px;top:268px;width:65px;height:26px;display:flex;align-items:center;padding-top:1.5px;color:#4a4a4a"><div><span class="d">5</span></div></div>
<div class="a mono" style="left:544.5px;top:268px;width:66px;height:26px;display:flex;align-items:center;padding-top:1.5px;color:#4a4a4a"><div><span class="d">8</span></div></div>
<div class="a mono" style="left:610.5px;top:268px;width:59px;height:26px;display:flex;align-items:center;padding-top:1.5px;color:#4a4a4a"><div><span class="d">0</span></div></div>
<div class="a mono" style="left:669.5px;top:268px;width:60px;height:26px;display:flex;align-items:center;padding-top:1.5px;color:#4a4a4a"><div><span class="d">0</span></div></div>
<div class="a mono" style="left:729.5px;top:268px;width:67px;height:26px;display:flex;align-items:center;padding-top:1.5px;color:#4a4a4a"><div><span class="d">0</span></div></div>
<div class="a mono" style="left:796.5px;top:268px;width:57px;height:26px;display:flex;align-items:center;padding-top:1.5px;color:#4a4a4a"><div><span class="d">0</span></div></div>
<div class="a mono" style="left:853.5px;top:268px;width:56px;height:26px;display:flex;align-items:center;padding-top:1.5px;color:#4a4a4a"><div><span class="d">5</span></div></div>
<div class="a mono" style="left:909.5px;top:268px;width:62px;height:26px;display:flex;align-items:center;padding-top:1.5px;color:#4a4a4a"><div><span class="d">150</span>%</div></div>
<div class="a mono" style="left:971.5px;top:268px;width:60px;height:26px;display:flex;align-items:center;padding-top:1.5px;color:#4a4a4a"><div><span class="d">0</span>%</div></div>
<div class="a mono" style="left:1031.5px;top:268px;width:49px;height:26px;display:flex;align-items:center;padding-top:1.5px;color:#4a4a4a"><div><span class="d">0</span>%</div></div>
<div class="a mono" style="left:1080.5px;top:268px;width:55px;height:26px;display:flex;align-items:center;padding-top:1.5px;color:#4a4a4a"><div><span class="d">0</span>%</div></div>
<div class="a mono" style="left:1135.5px;top:268px;width:63px;height:26px;display:flex;align-items:center;padding-top:1.5px;color:#4a4a4a"><div><span class="d">0</span>%</div></div>
<div class="a" style="left:194px;top:293px;width:1027px;height:1px;background:#d9d9d9"></div>
<div class="a mono" style="left:196.5px;top:293px;width:74px;height:27px;display:flex;align-items:center;padding-top:1.5px;color:#4a4a4a"><div>MO<i class="h"></i>
<span class="d">2511240001</span></div></div>
<div class="a mono" style="left:270.5px;top:293px;width:75px;height:27px;display:flex;align-items:center;padding-top:1.5px;color:#4a4a4a"><div>Prod Start</div></div>
<div class="a mono" style="left:345.5px;top:293px;width:74px;height:27px;display:flex;align-items:center;padding-top:1.5px;color:#4a4a4a"><div>Standard MO</div></div>
<div class="a mono" style="left:419.5px;top:293px;width:60px;height:27px;display:flex;align-items:center;padding-top:1.5px;color:#4a4a4a"><div><span class="d">5</span></div></div>
<div class="a mono" style="left:479.5px;top:293px;width:65px;height:27px;display:flex;align-items:center;padding-top:1.5px;color:#4a4a4a"><div><span class="d">5</span></div></div>
<div class="a mono" style="left:544.5px;top:293px;width:66px;height:27px;display:flex;align-items:center;padding-top:1.5px;color:#4a4a4a"><div><span class="d">2</span></div></div>
<div class="a mono" style="left:610.5px;top:293px;width:59px;height:27px;display:flex;align-items:center;padding-top:1.5px;color:#4a4a4a"><div><span class="d">0</span></div></div>
<div class="a mono" style="left:669.5px;top:293px;width:60px;height:27px;display:flex;align-items:center;padding-top:1.5px;color:#4a4a4a"><div><span class="d">0</span></div></div>
<div class="a mono" style="left:729.5px;top:293px;width:67px;height:27px;display:flex;align-items:center;padding-top:1.5px;color:#4a4a4a"><div><span class="d">0</span></div></div>
<div class="a mono" style="left:796.5px;top:293px;width:57px;height:27px;display:flex;align-items:center;padding-top:1.5px;color:#4a4a4a"><div><span class="d">0</span></div></div>
<div class="a mono" style="left:853.5px;top:293px;width:56px;height:27px;display:flex;align-items:center;padding-top:1.5px;color:#4a4a4a"><div><span class="d">5</span></div></div>
<div class="a mono" style="left:909.5px;top:293px;width:62px;height:27px;display:flex;align-items:center;padding-top:1.5px;color:#4a4a4a"><div><span class="d">40</span>%</div></div>
<div class="a mono" style="left:971.5px;top:293px;width:60px;height:27px;display:flex;align-items:center;padding-top:1.5px;color:#4a4a4a"><div><span class="d">0</span>%</div></div>
<div class="a mono" style="left:1031.5px;top:293px;width:49px;height:27px;display:flex;align-items:center;padding-top:1.5px;color:#4a4a4a"><div><span class="d">0</span>%</div></div>
<div class="a mono" style="left:1080.5px;top:293px;width:55px;height:27px;display:flex;align-items:center;padding-top:1.5px;color:#4a4a4a"><div><span class="d">0</span>%</div></div>
<div class="a mono" style="left:1135.5px;top:293px;width:63px;height:27px;display:flex;align-items:center;padding-top:1.5px;color:#4a4a4a"><div><span class="d">0</span>%</div></div>
<div class="a" style="left:194px;top:319px;width:1027px;height:1px;background:#d9d9d9"></div>
<div class="a mono" style="left:196.5px;top:319px;width:74px;height:26px;display:flex;align-items:center;padding-top:1.5px;color:#4a4a4a"><div>MO<i class="h"></i>
<span class="d">2511250001</span></div></div>
<div class="a mono" style="left:270.5px;top:319px;width:75px;height:26px;display:flex;align-items:center;padding-top:1.5px;color:#4a4a4a"><div>Prod Start</div></div>
<div class="a mono" style="left:345.5px;top:319px;width:74px;height:26px;display:flex;align-items:center;padding-top:1.5px;color:#4a4a4a"><div>Standard MO</div></div>
<div class="a mono" style="left:419.5px;top:319px;width:60px;height:26px;display:flex;align-items:center;padding-top:1.5px;color:#4a4a4a"><div><span class="d">5</span></div></div>
<div class="a mono" style="left:479.5px;top:319px;width:65px;height:26px;display:flex;align-items:center;padding-top:1.5px;color:#4a4a4a"><div><span class="d">5</span></div></div>
<div class="a mono" style="left:544.5px;top:319px;width:66px;height:26px;display:flex;align-items:center;padding-top:1.5px;color:#4a4a4a"><div><span class="d">2</span></div></div>
<div class="a mono" style="left:610.5px;top:319px;width:59px;height:26px;display:flex;align-items:center;padding-top:1.5px;color:#4a4a4a"><div><span class="d">2</span></div></div>
<div class="a mono" style="left:669.5px;top:319px;width:60px;height:26px;display:flex;align-items:center;padding-top:1.5px;color:#4a4a4a"><div><span class="d">2</span></div></div>
<div class="a mono" style="left:729.5px;top:319px;width:67px;height:26px;display:flex;align-items:center;padding-top:1.5px;color:#4a4a4a"><div><span class="d">0</span></div></div>
<div class="a mono" style="left:796.5px;top:319px;width:57px;height:26px;display:flex;align-items:center;padding-top:1.5px;color:#4a4a4a"><div><span class="d">0</span></div></div>
<div class="a mono" style="left:853.5px;top:319px;width:56px;height:26px;display:flex;align-items:center;padding-top:1.5px;color:#4a4a4a"><div><span class="d">5</span></div></div>
<div class="a mono" style="left:909.5px;top:319px;width:62px;height:26px;display:flex;align-items:center;padding-top:1.5px;color:#4a4a4a"><div><span class="d">40</span>%</div></div>
<div class="a mono" style="left:971.5px;top:319px;width:60px;height:26px;display:flex;align-items:center;padding-top:1.5px;color:#4a4a4a"><div><span class="d">40</span>%</div></div>
<div class="a mono" style="left:1031.5px;top:319px;width:49px;height:26px;display:flex;align-items:center;padding-top:1.5px;color:#4a4a4a"><div><span class="d">0</span>%</div></div>
<div class="a mono" style="left:1080.5px;top:319px;width:55px;height:26px;display:flex;align-items:center;padding-top:1.5px;color:#4a4a4a"><div><span class="d">0</span>%</div></div>
<div class="a mono" style="left:1135.5px;top:319px;width:63px;height:26px;display:flex;align-items:center;padding-top:1.5px;color:#4a4a4a"><div><span class="d">0</span>%</div></div>
<div class="a" style="left:194px;top:344px;width:1027px;height:1px;background:#d9d9d9"></div>
<div class="a mono" style="left:196.5px;top:344px;width:74px;height:37px;display:flex;align-items:center;padding-top:1.5px;color:#4a4a4a"><div>MO<i class="h"></i>
<span class="d">2511010010</span></div></div>
<div class="a mono" style="left:270.5px;top:344px;width:75px;height:37px;display:flex;align-items:center;padding-top:1.5px;color:#4a4a4a"><div>Prod Start</div></div>
<div class="a mono" style="left:345.5px;top:344px;width:74px;height:37px;display:flex;align-items:center;padding-top:1.5px;color:#4a4a4a"><div>Standard MO</div></div>
<div class="a mono" style="left:419.5px;top:344px;width:60px;height:37px;display:flex;align-items:center;padding-top:1.5px;color:#4a4a4a"><div><span class="d">5</span>.<span class="d">0000000</span>
<span class="d">00</span></div></div>
<div class="a mono" style="left:479.5px;top:344px;width:65px;height:37px;display:flex;align-items:center;padding-top:1.5px;color:#4a4a4a"><div><span class="d">5</span>.<span class="d">00000000</span>
<span class="d">0</span></div></div>
<div class="a mono" style="left:544.5px;top:344px;width:66px;height:37px;display:flex;align-items:center;padding-top:1.5px;color:#4a4a4a"><div><span class="d">0</span>.<span class="d">10000000</span>
<span class="d">0</span></div></div>
<div class="a mono" style="left:610.5px;top:344px;width:59px;height:37px;display:flex;align-items:center;padding-top:1.5px;color:#4a4a4a"><div><span class="d">0</span>.<span class="d">0000000</span>
<span class="d">00</span></div></div>
<div class="a mono" style="left:669.5px;top:344px;width:60px;height:37px;display:flex;align-items:center;padding-top:1.5px;color:#4a4a4a"><div><span class="d">0</span>.<span class="d">0000000</span>
<span class="d">00</span></div></div>
<div class="a mono" style="left:729.5px;top:344px;width:67px;height:37px;display:flex;align-items:center;padding-top:1.5px;color:#4a4a4a"><div><span class="d">0</span>.<span class="d">400000000</span></div></div>
<div class="a mono" style="left:796.5px;top:344px;width:57px;height:37px;display:flex;align-items:center;padding-top:1.5px;color:#4a4a4a"><div><span class="d">0</span>.<span class="d">0000000</span>
<span class="d">00</span></div></div>
<div class="a mono" style="left:853.5px;top:344px;width:56px;height:37px;display:flex;align-items:center;padding-top:1.5px;color:#4a4a4a"><div><span class="d">5</span>.<span class="d">0000000</span>
<span class="d">00</span></div></div>
<div class="a mono" style="left:909.5px;top:344px;width:62px;height:37px;display:flex;align-items:center;padding-top:1.5px;color:#4a4a4a"><div><span class="d">2</span>%</div></div>
<div class="a mono" style="left:971.5px;top:344px;width:60px;height:37px;display:flex;align-items:center;padding-top:1.5px;color:#4a4a4a"><div><span class="d">0</span>%</div></div>
<div class="a mono" style="left:1031.5px;top:344px;width:49px;height:37px;display:flex;align-items:center;padding-top:1.5px;color:#4a4a4a"><div><span class="d">8</span>%</div></div>
<div class="a mono" style="left:1080.5px;top:344px;width:55px;height:37px;display:flex;align-items:center;padding-top:1.5px;color:#4a4a4a"><div><span class="d">0</span>%</div></div>
<div class="a mono" style="left:1135.5px;top:344px;width:63px;height:37px;display:flex;align-items:center;padding-top:1.5px;color:#4a4a4a"><div><span class="d">8</span>%</div></div>
<div class="a" style="left:194px;top:380px;width:1027px;height:1px;background:#d9d9d9"></div>
<div class="a mono" style="left:64.5px;top:64px;width:75px;height:51px;display:flex;align-items:center;padding-top:1.5px;color:#4a4a4a"><div></div></div>
<div class="a mono" style="left:139.5px;top:64px;width:57px;height:51px;display:flex;align-items:center;padding-top:1.5px;color:#4a4a4a"><div><span class="d">100</span></div></div>
<div class="a" style="left:62px;top:114px;width:132px;height:1px;background:#d9d9d9"></div>
<div class="a mono" style="left:64.5px;top:114px;width:75px;height:48px;display:flex;align-items:center;padding-top:1.5px;color:#4a4a4a"><div>; .<i class="h"></i><span class="d">0</span><i class="h"></i><span class="d">0</span><i class="h"></i><span class="d">0</span><i class="h"></i><span class="d">0</span><i class="h"></i>
<span class="d">0</span><i class="h"></i><span class="d">0</span><i class="h"></i><span class="d">0</span><i class="h"></i><span class="d">0</span><i class="h"></i><span class="d">0</span><i class="h"></i>
<span class="d">20</span><i class="h"></i><span class="d">0</span><i class="h"></i><span class="d">0</span><i class="h"></i><span class="d">0</span><i class="h"></i><span class="d">0</span><i class="h"></i>
<span class="d">0</span><i class="h"></i><span class="d">0</span><i class="h"></i><span class="d">0</span><i class="h"></i><span class="d">0</span><i class="h"></i><span class="d">0</span></div></div>
<div class="a mono" style="left:139.5px;top:114px;width:57px;height:48px;display:flex;align-items:center;padding-top:1.5px;color:#4a4a4a"><div><span class="d">100</span></div></div>
<div class="a" style="left:62px;top:161px;width:132px;height:1px;background:#d9d9d9"></div>
<div class="a mono" style="left:64.5px;top:161px;width:75px;height:57px;display:flex;align-items:center;padding-top:1.5px;color:#4a4a4a"><div><span class="d">0</span><i class="h"></i><span class="d">0</span><i class="h"></i><span class="d">0</span><i class="h"></i><span class="d">0</span><i class="h"></i><span class="d">0</span><i class="h"></i><span class="d">0</span><i class="h"></i>
<span class="d">0</span><i class="h"></i><span class="d">0</span><i class="h"></i><span class="d">0</span><i class="h"></i><span class="d">0</span><i class="h"></i><span class="d">0</span><i class="h"></i><span class="d">0</span><i class="h"></i>
<span class="d">0</span><i class="h"></i><span class="d">0</span><i class="h"></i><span class="d">0</span><i class="h"></i><span class="d">0</span><i class="h"></i><span class="d">0</span><i class="h"></i><span class="d">0</span><i class="h"></i>
<span class="d">0</span><i class="h"></i><span class="d">0</span><i class="h"></i><span class="d">0</span><i class="h"></i><span class="d">0</span><i class="h"></i>
<span class="d">000001004</span></div></div>
<div class="a mono" style="left:139.5px;top:161px;width:57px;height:57px;display:flex;align-items:center;padding-top:1.5px;color:#4a4a4a"><div><span class="d">100</span></div></div>
<div class="a" style="left:62px;top:217px;width:132px;height:1px;background:#d9d9d9"></div>
<div class="a mono" style="left:64.5px;top:217px;width:75px;height:26px;display:flex;align-items:center;padding-top:1.5px;color:#4a4a4a"><div><span class="d">0</span><i class="h"></i><span class="d">0</span><i class="h"></i><span class="d">0</span><i class="h"></i><span class="d">0</span><i class="h"></i><span class="d">0</span><i class="h"></i><span class="d">0</span><i class="h"></i>
<span class="d">0</span><i class="h"></i><span class="d">984</span></div></div>
<div class="a mono" style="left:139.5px;top:217px;width:57px;height:26px;display:flex;align-items:center;padding-top:1.5px;color:#4a4a4a"><div><span class="d">100</span></div></div>
<div class="a" style="left:62px;top:242px;width:132px;height:1px;background:#d9d9d9"></div>
<div class="a mono" style="left:64.5px;top:242px;width:75px;height:27px;display:flex;align-items:center;padding-top:1.5px;color:#4a4a4a"><div><span class="d">0</span><i class="h"></i><span class="d">0</span><i class="h"></i><span class="d">0</span><i class="h"></i><span class="d">0</span><i class="h"></i><span class="d">0</span><i class="h"></i><span class="d">0</span><i class="h"></i>
<span class="d">0</span><i class="h"></i><span class="d">985</span></div></div>
<div class="a mono" style="left:139.5px;top:242px;width:57px;height:27px;display:flex;align-items:center;padding-top:1.5px;color:#4a4a4a"><div><span class="d">100</span></div></div>
<div class="a" style="left:62px;top:268px;width:132px;height:1px;background:#d9d9d9"></div>
<div class="a mono" style="left:64.5px;top:268px;width:75px;height:77px;display:flex;align-items:center;padding-top:1.5px;color:#4a4a4a"><div><span class="d">0115</span><i class="h"></i>    <i class="h"></i><span class="d">0</span><i class="h"></i>
<span class="d">0</span><i class="h"></i><span class="d">0</span><i class="h"></i><span class="d">0</span><i class="h"></i><span class="d">0</span><i class="h"></i><span class="d">0</span><i class="h"></i><span class="d">0</span></div></div>
<div class="a mono" style="left:139.5px;top:268px;width:57px;height:77px;display:flex;align-items:center;padding-top:1.5px;color:#4a4a4a"><div><span class="d">100</span></div></div>
<div class="a" style="left:62px;top:344px;width:132px;height:1px;background:#d9d9d9"></div>
<div class="a mono" style="left:64.5px;top:344px;width:75px;height:37px;display:flex;align-items:center;padding-top:1.5px;color:#4a4a4a"><div><span class="d">0116</span><i class="h"></i>VMI<i class="h"></i>
<span class="d">009</span><i class="h"></i>Male<i class="h"></i><span class="d">1</span><i class="h"></i>
<span class="d">0</span><i class="h"></i><span class="d">0</span><i class="h"></i><span class="d">0</span><i class="h"></i><span class="d">0</span></div></div>
<div class="a mono" style="left:139.5px;top:344px;width:57px;height:37px;display:flex;align-items:center;padding-top:1.5px;color:#4a4a4a"><div><span class="d">100</span></div></div>
<div class="a" style="left:62px;top:380px;width:132px;height:1px;background:#d9d9d9"></div>
<div class="a mono" style="left:3px;top:282px;color:#444"><span class="d">105</span></div>
<div class="a" style="left:62px;top:64px;width:1px;height:414px;background:#d9d9d9"></div>
<div class="a" style="left:137px;top:64px;width:1px;height:414px;background:#d9d9d9"></div>
<div class="a" style="left:194px;top:64px;width:1px;height:414px;background:#d9d9d9"></div>
<div class="a" style="left:268px;top:64px;width:1px;height:414px;background:#d9d9d9"></div>
<div class="a" style="left:343px;top:64px;width:1px;height:414px;background:#d9d9d9"></div>
<div class="a" style="left:417px;top:64px;width:1px;height:414px;background:#d9d9d9"></div>
<div class="a" style="left:477px;top:64px;width:1px;height:414px;background:#d9d9d9"></div>
<div class="a" style="left:542px;top:64px;width:1px;height:414px;background:#d9d9d9"></div>
<div class="a" style="left:608px;top:64px;width:1px;height:414px;background:#d9d9d9"></div>
<div class="a" style="left:667px;top:64px;width:1px;height:414px;background:#d9d9d9"></div>
<div class="a" style="left:727px;top:64px;width:1px;height:414px;background:#d9d9d9"></div>
<div class="a" style="left:794px;top:64px;width:1px;height:414px;background:#d9d9d9"></div>
<div class="a" style="left:851px;top:64px;width:1px;height:414px;background:#d9d9d9"></div>
<div class="a" style="left:907px;top:64px;width:1px;height:414px;background:#d9d9d9"></div>
<div class="a" style="left:969px;top:64px;width:1px;height:414px;background:#d9d9d9"></div>
<div class="a" style="left:1029px;top:64px;width:1px;height:414px;background:#d9d9d9"></div>
<div class="a" style="left:1078px;top:64px;width:1px;height:414px;background:#d9d9d9"></div>
<div class="a" style="left:1133px;top:64px;width:1px;height:414px;background:#d9d9d9"></div>
<div class="a" style="left:1196px;top:64px;width:1px;height:414px;background:#d9d9d9"></div>
<svg class="a" style="left:91px;top:293px" width="26" height="14" viewBox="170 515 26 14"><g stroke="#444" stroke-width="1" fill="none"><path d="M173.9 518.3H180.6L177.7 521.3"/><path d="M173.1 521.6H182"/><path d="M177.7 521.3V526.3Q177.7 527 176.1 526.6"/><path d="M186.7 517.3L183.6 522.3"/><path d="M185.4 520V527"/><path d="M188.6 518.6L187.4 521.4M187.6 520.3H192.4"/><path d="M187 523.4H193"/><path d="M190.5 517.3V527"/></g></svg>
</div>
<div class="a" style="left:1235px;top:218px;width:9px;height:370px;background:#f1f1f1"></div>
<div class="a" style="left:1236px;top:256px;width:7px;height:238px;border-radius:4px;background:#c1c1c1"></div>
<div class="a" style="left:79px;top:588px;width:1156px;height:9px;background:#f1f1f1"></div>
<div class="a" style="left:85px;top:589px;width:1099px;height:7px;border-radius:4px;background:#c1c1c1"></div>
<div class="a" style="left:1230px;top:290px;width:30.5px;height:30.5px;border-radius:50%;background:#8e8e8e"></div>
<svg class="a" style="left:1230px;top:290px" width="31" height="31" viewBox="1230 290 31 31"><rect x="1237.0" y="298.79999999999995" width="4.2" height="4.2" rx="1.7" fill="#fff"/><rect x="1237.0" y="303.9" width="4.2" height="4.2" rx="1.7" fill="#fff"/><rect x="1237.0" y="309.0" width="4.2" height="4.2" rx="1.7" fill="#fff"/><rect x="1243.0" y="298.79999999999995" width="4.2" height="4.2" rx="1.7" fill="#fff"/><rect x="1243.0" y="303.9" width="4.2" height="4.2" rx="1.7" fill="#fff"/><rect x="1243.0" y="309.0" width="4.2" height="4.2" rx="1.7" fill="#fff"/><rect x="1248.9" y="298.79999999999995" width="4.2" height="4.2" rx="1.7" fill="#fff"/><rect x="1248.9" y="303.9" width="4.2" height="4.2" rx="1.7" fill="#fff"/><rect x="1248.9" y="309.0" width="4.2" height="4.2" rx="1.7" fill="#fff"/></svg>
<div class="a" style="left:1233px;top:452.3px;width:29.4px;height:29.4px;border-radius:50%;background:#fff;box-shadow:0 0 2px rgba(0,0,0,0.06)"></div>
<svg class="a" style="left:1238px;top:457px" width="20" height="20" viewBox="1238 457 20 20"><path d="M1242.5 465.2V462.9Q1242.5 461.8 1243.6 461.8H1245.8M1251.5 461.8H1253.7Q1254.8 461.8 1254.8 462.9V465.2M1254.8 469.4V471.7Q1254.8 472.8 1253.7 472.8H1251.5M1245.8 472.8H1243.6Q1242.5 472.8 1242.5 471.7V469.4M1242.2 467.3H1255.1" stroke="#8a8a8a" stroke-width="1.3" fill="none"/></svg>
<div class="a" style="left:79px;top:616px;width:65px;height:15px;border-radius:3px;background:#f5452f;overflow:hidden"><div class="t" style="left:2px;top:2.5px;font-size:10px;color:#fff;letter-spacing:-0.35px">Query Scheme</div></div>
<div class="a" style="left:151px;top:616px;width:65px;height:15px;border-radius:3px;background:#f5452f;overflow:hidden"><div class="t" style="left:3px;top:2.5px;font-size:10px;color:#fff;letter-spacing:-0.38px">Adjust Column</div></div>
<div class="t" style="left:575px;top:618px;font-size:10px;color:#333;letter-spacing:-0.5px">Scheme</div>
<div class="a" style="left:613px;top:615px;width:84px;height:15px;border:1px solid #e3e3e3;border-radius:2px;background:#fff;overflow:hidden"><div class="t" style="left:2px;top:2.5px;font-size:10px;color:#333;letter-spacing:-0.3px">zq1(Default)</div><div class="a" style="left:61.5px;top:0;width:6.8px;height:13px;overflow:hidden"><div class="t" style="left:0;top:2.5px;font-size:10px;color:#333;letter-spacing:-0.3px">zq</div></div></div>
<svg class="a" style="left:670px;top:617px" width="5" height="11" viewBox="670 617 5 11"><path d="M674.1 618.6H672.6Q671.2 620.2 671.2 622.8Q671.2 625.4 672.6 627H674.1V626.3Q672.9 625 672.9 622.8Q672.9 620.6 674.1 619.3Z" fill="#222"/></svg>
<svg class="a" style="left:687px;top:620px" width="8" height="6" viewBox="687 620 8 6"><path d="M689 621.9L691.2 624.3L693.4 621.9" stroke="#b3b3b3" stroke-width="1.2" fill="none"/></svg>
<div class="t" style="left:725px;top:618px;font-size:10px;color:#333;letter-spacing:-0.44px">Language</div>
<div class="a" style="left:771px;top:615px;width:65px;height:15px;border:1px solid #e3e3e3;border-radius:2px;background:#fff;overflow:hidden"><div class="t" style="left:2px;top:2.5px;font-size:10px;color:#333;letter-spacing:-0.3px">English (U.S</div><div class="a" style="left:50.5px;top:0;width:14px;height:13px;background:#fff"></div></div>
<svg class="a" style="left:826px;top:620px" width="8" height="6" viewBox="826 620 8 6"><path d="M828.1 621.9L830.4 624.3L832.6 621.9" stroke="#b3b3b3" stroke-width="1.2" fill="none"/></svg>
</body></html>
